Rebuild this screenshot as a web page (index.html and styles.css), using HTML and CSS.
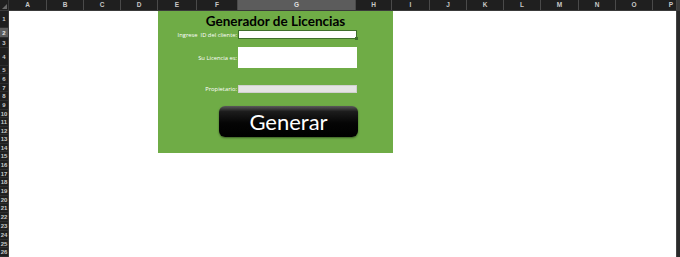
FILE: index.html
```html
<!DOCTYPE html>
<html lang="es">
<head>
<meta charset="utf-8">
<title>Generador de Licencias</title>
<link rel="stylesheet" href="styles.css">
</head>
<body>
<div class="app">
  <div class="colhead">
    <div class="corner"><span class="tri"></span></div>
    <div class="cols">
      <div class="ch">A</div><div class="ch">B</div><div class="ch">C</div><div class="ch">D</div>
      <div class="ch">E</div><div class="ch">F</div><div class="ch sel">G</div><div class="ch">H</div>
      <div class="ch">I</div><div class="ch">J</div><div class="ch">K</div><div class="ch">L</div>
      <div class="ch">M</div><div class="ch">N</div><div class="ch">O</div><div class="ch">P</div>
    </div>
    <div class="endcap top"></div>
  </div>
  <div class="main">
    <div class="rowhead">
      <div class="rh h17">1</div><div class="rh h10 sel">2</div><div class="rh h10">3</div>
      <div class="rh h18">4</div><div class="rh h8">5</div><div class="rh h10">6</div>
      <div class="rh h8">7</div><div class="rh h9">8</div><div class="rh h9">9</div>
      <div class="rh h8">10</div><div class="rh h9">11</div><div class="rh h8">12</div>
      <div class="rh h9">13</div><div class="rh h8">14</div><div class="rh h9">15</div>
      <div class="rh h9">16</div><div class="rh h8">17</div><div class="rh h9">18</div>
      <div class="rh h9">19</div><div class="rh h8">20</div><div class="rh h9">21</div>
      <div class="rh h9">22</div><div class="rh h9">23</div><div class="rh h9">24</div>
      <div class="rh h8">25</div><div class="rh h9">26</div>
    </div>
    <div class="sheet">
      <div class="panel">
        <div class="title">Generador de Licencias</div>
        <div class="form">
          <div class="label">Ingrese&nbsp; ID del cliente:</div>
          <div class="box box-id"></div>
          <div class="label lic">Su Licencia es:</div>
          <div class="box box-lic"></div>
          <div class="label own">Propietario:</div>
          <div class="box box-own"></div>
        </div>
        <div class="btn">Generar</div>
      </div>
    </div>
    <div class="endcap"></div>
  </div>
</div>
</body>
</html>
```

FILE: styles.css
```css
* { box-sizing: border-box; }
html, body { margin: 0; padding: 0; }
body {
  width: 680px;
  height: 257px;
  overflow: hidden;
  background: #ffffff;
  font-family: "Liberation Sans", Arial, sans-serif;
}
.app {
  --cols: 38px 37px 37px 37px 39px 41px 118px 36px 38px 37px 37px 37px 38px 37px 37px 37px;
  display: flex;
  flex-direction: column;
  width: 680px;
  height: 257px;
}
.colhead {
  display: flex;
  height: 11px;
  background: #1f1f1f;
  border-bottom: 1px solid #3a3a3a;
}
.corner {
  width: 9px;
  flex: none;
  position: relative;
  border-right: 1px solid #3a3a3a;
}
.tri {
  position: absolute;
  right: 1px;
  bottom: 1px;
  width: 0;
  height: 0;
  border-left: 5px solid transparent;
  border-bottom: 5px solid #6a6a6a;
}
.cols {
  flex: 1;
  overflow: hidden;
  display: grid;
  grid-template-columns: var(--cols);
}
.ch {
  color: #c8c8c8;
  font-size: 6.5px;
  font-weight: bold;
  line-height: 10px;
  text-align: center;
  border-right: 1px solid #4a4a4a;
}
.ch.sel {
  background: #5c5c5c;
  color: #e0e0e0;
  border-bottom: 1px solid #9a9a9a;
}
.endcap {
  width: 4px;
  flex: none;
  background: #2a2a2a;
  border-left: 1px solid #444;
}
.endcap.top { background: #3a3a3a; }
.main {
  flex: 1;
  display: flex;
  overflow: hidden;
}
.rowhead {
  width: 9px;
  flex: none;
  background: #1f1f1f;
  display: flex;
  flex-direction: column;
  border-right: 1px solid #3a3a3a;
}
.rh {
  color: #c8c8c8;
  font-size: 6px;
  font-weight: bold;
  display: flex;
  align-items: center;
  justify-content: center;
  border-bottom: 1px solid #2e2e2e;
  flex: none;
}
.rh.sel { background: #5c5c5c; color: #e6e6e6; }
.h8 { height: 8px; }
.h9 { height: 9px; }
.h10 { height: 10px; }
.h17 { height: 17px; }
.h18 { height: 18px; }
.sheet {
  flex: 1;
  overflow: hidden;
  display: grid;
  grid-template-columns: var(--cols);
  align-items: start;
}
.panel {
  grid-column: 5 / 9;
  height: 142px;
  margin-right: -1px;
  background: #6fac46;
  display: flex;
  flex-direction: column;
}
.title {
  height: 19px;
  line-height: 20px;
  text-align: center;
  font-family: Lato, "Open Sans", sans-serif;
  font-weight: bold;
  font-size: 13.5px;
  color: #000;
}
.form {
  display: grid;
  grid-template-columns: 80px 119px;
}
.label {
  color: #ffffff;
  font-family: "Open Sans", sans-serif;
  font-size: 5.8px;
  text-align: right;
  align-self: center;
  padding-right: 1px;
  white-space: nowrap;
}
.lic { margin-top: 8px; }
.own { margin-top: 17px; }
.box { background: #ffffff; }
.box-id {
  height: 9px;
  border: 1px solid #3f6f2c;
  position: relative;
}
.box-id::after {
  content: "";
  position: absolute;
  right: -2px;
  bottom: -2px;
  width: 3px;
  height: 3px;
  background: #3f6f2c;
}
.box-lic {
  height: 21px;
  margin-top: 8px;
}
.box-own {
  height: 8px;
  margin-top: 17px;
  background: #e4e4e4;
  border: 1px solid #d0d0d0;
}
.btn {
  margin-top: 13px;
  margin-left: 61px;
  width: 139px;
  height: 31px;
  border-radius: 6px;
  background: linear-gradient(to bottom, #5a5a5a 0%, #1c1c1c 18%, #050505 55%, #000000 100%);
  box-shadow: 0 1px 2px rgba(0,0,0,0.45);
  color: #ffffff;
  font-family: Lato, "Open Sans", sans-serif;
  font-size: 22px;
  line-height: 31px;
  text-align: center;
}
```
